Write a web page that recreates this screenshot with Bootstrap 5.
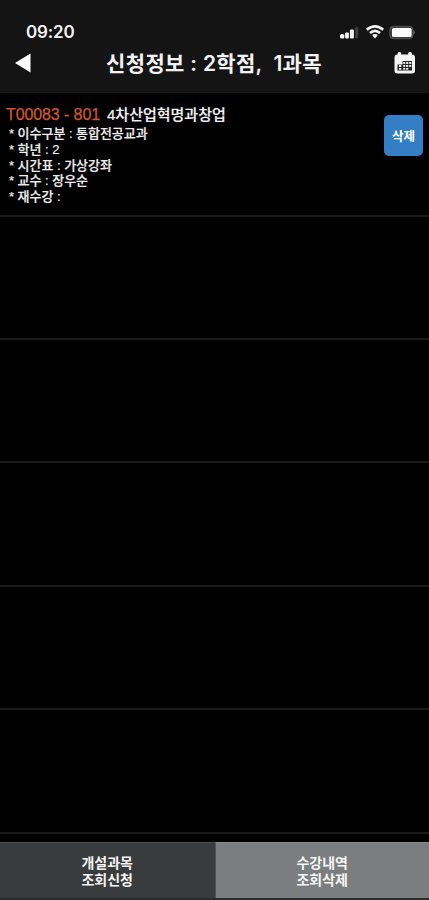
<!DOCTYPE html>
<html lang="ko">
<head>
<meta charset="utf-8">
<meta name="viewport" content="width=device-width, initial-scale=1">
<title>신청정보</title>
<link href="https://cdn.jsdelivr.net/npm/bootstrap@5.3.0/dist/css/bootstrap.min.css" rel="stylesheet">
<style>
body{background:#000;color:#f2f2f2;font-family:"Liberation Sans","Noto Sans CJK KR",sans-serif;height:900px;overflow:hidden}
.app-header{background:#141414;height:93px;padding-top:22px}
.status-row{height:20px;padding:0 14px 0 26px}
.clock{font:600 17px/20px Inter,sans-serif;letter-spacing:-.15px}
.title-row{height:42px;padding:0 13px 0 15px}
.screen-title{font:600 21px/42px Inter,"Noto Sans CJK KR",sans-serif;letter-spacing:.32px;white-space:pre;padding:2px 0 0 3px}
.course-row{height:123.4px;border-bottom:2px solid #1b1b1b}
.course-row.first-row{height:123.6px;padding:12px 6px 0 6px}
.course-head{height:20px;line-height:20px;white-space:nowrap}
.course-code{color:#d4572a;font-size:16px;letter-spacing:-.1px;-webkit-text-stroke:.25px #d4572a}
.course-name{font:500 15px/20px "Liberation Sans","Noto Sans CJK KR",sans-serif;letter-spacing:0;-webkit-text-stroke:.2px #f2f2f2;margin-left:7px}
.course-info{font:500 13px/15.8px "Liberation Sans","Noto Sans CJK KR",sans-serif;letter-spacing:-.03px;padding-left:3px;margin-top:1px;color:#eee;-webkit-text-stroke:.2px #eee}
.course-info li{white-space:pre;height:15.8px}
.delete-btn{width:39px;height:41px;margin:10px 0 0;background:#347ec5;border-radius:5px;color:#fff;font:700 12.5px/39px "Noto Sans CJK KR",sans-serif}
.delete-btn:hover{background:#2c6eae;color:#fff}
.bottom-tabs{height:58px;border-bottom:2px solid #292b2c}
.bottom-tab{background:#3a3b3c;color:#f5f5f5;font:700 14px/17px "Liberation Sans","Noto Sans CJK KR",sans-serif;border-top:1px solid #505152;padding-top:2px}
.bottom-tab.active{background:#7c7d7e;border-left:1px solid #555;border-top-color:#8c8d8e}
</style>
<script src="https://cdn.jsdelivr.net/npm/bootstrap@5.3.0/dist/js/bootstrap.bundle.min.js"></script>
</head>
<body class="d-flex flex-column">
<header class="app-header flex-shrink-0">
  <div class="status-row d-flex align-items-center justify-content-between">
    <span class="clock">09:20</span>
    <svg width="76" height="16" viewBox="0 1 76 16" aria-hidden="true">
      <g fill="#f4f4f4"><rect x="1" y="11" width="4.4" height="4.6" rx="1.6"/><rect x="6.1" y="9.4" width="3.8" height="6.2" rx="1"/><rect x="10.9" y="6.5" width="4" height="9.1" rx="1"/></g>
      <rect x="16.2" y="4" width="3" height="11.6" rx="1" fill="#3c3c3c"/>
      <g fill="none" stroke="#f4f4f4" stroke-width="2.7"><path d="M27.8 6.8Q36 0 44.2 6.8"/><path d="M31 10.1Q36 5.7 41 10.1"/></g>
      <path d="M33.1 12Q36 9.9 38.9 12L36 15.4Z" fill="#f4f4f4"/>
      <rect x="50.8" y="3.3" width="23" height="12.4" rx="3.4" fill="#3d3d3d" stroke="#555"/>
      <rect x="53" y="4.9" width="19.6" height="9.2" rx="1.6" fill="#fff"/>
      <path d="M74.5 7Q77 9.5 74.5 12Z" fill="#777"/>
    </svg>
  </div>
  <div class="title-row d-flex align-items-center justify-content-between">
    <svg width="16" height="20" viewBox="0 0 16 20" aria-hidden="true"><path d="M0 10L15.5 .5V19.5Z" fill="#fff"/></svg>
    <h1 class="screen-title m-0">신청정보 : 2학점,  1과목</h1>
    <svg width="22" height="22" viewBox="0 0 22 22" aria-hidden="true">
      <rect x=".5" y="2.5" width="20.5" height="19" rx="3" fill="#f4f4f4"/>
      <rect x="3.6" y="0" width="3.6" height="6" rx="1.5" fill="#f4f4f4"/><rect x="14.2" y="0" width="3.6" height="6" rx="1.5" fill="#f4f4f4"/>
      <path d="M8.5 9H18V18.5H3.5V12.5H8.5Z" fill="#222"/>
      <g fill="#f4f4f4"><rect x="9.2" y="10" width="2.1" height="1.9"/><rect x="12.2" y="10" width="2.1" height="1.9"/><rect x="15.2" y="10" width="2.1" height="1.9"/><rect x="5" y="13" width="2.3" height="1.9"/><rect x="9.2" y="13" width="2.1" height="1.9"/><rect x="12.2" y="13" width="2.1" height="1.9"/><rect x="15.2" y="13" width="2.1" height="1.9"/><rect x="5" y="16" width="2.3" height="1.7"/><rect x="9.2" y="16" width="2.1" height="1.7"/><rect x="12.2" y="16" width="2.1" height="1.7"/></g>
    </svg>
  </div>
</header>
<main class="flex-grow-1 overflow-hidden">
  <section class="course-row first-row d-flex justify-content-between align-items-start">
    <div>
      <div class="course-head d-flex"><span class="course-code">T00083 - 801</span><span class="course-name">4차산업혁명과창업</span></div>
      <ul class="course-info list-unstyled mb-0">
        <li>* 이수구분 : 통합전공교과</li>
        <li>* 학년 : 2</li>
        <li>* 시간표 : 가상강좌</li>
        <li>* 교수 : 장우순</li>
        <li>* 재수강 :</li>
      </ul>
    </div>
    <button type="button" class="delete-btn btn border-0 p-0">삭제</button>
  </section>
  <div class="course-row"></div>
  <div class="course-row"></div>
  <div class="course-row"></div>
  <div class="course-row"></div>
  <div class="course-row"></div>
</main>
<nav class="bottom-tabs d-flex flex-shrink-0 text-center">
  <a href="#" class="bottom-tab w-50 d-flex align-items-center justify-content-center text-decoration-none"><span>개설과목<br>조회신청</span></a>
  <a href="#" class="bottom-tab active w-50 d-flex align-items-center justify-content-center text-decoration-none"><span>수강내역<br>조회삭제</span></a>
</nav>
</body>
</html>
